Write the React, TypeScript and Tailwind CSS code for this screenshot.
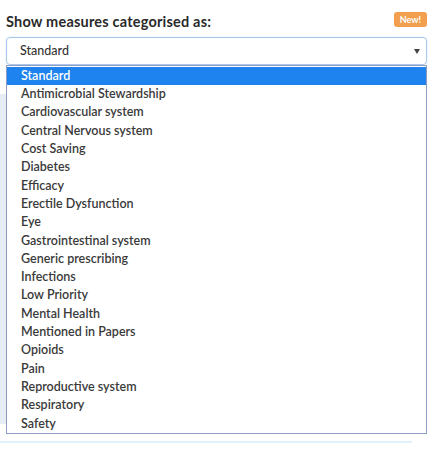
const OPTIONS = [
  'Standard',
  'Antimicrobial Stewardship',
  'Cardiovascular system',
  'Central Nervous system',
  'Cost Saving',
  'Diabetes',
  'Efficacy',
  'Erectile Dysfunction',
  'Eye',
  'Gastrointestinal system',
  'Generic prescribing',
  'Infections',
  'Low Priority',
  'Mental Health',
  'Mentioned in Papers',
  'Opioids',
  'Pain',
  'Reproductive system',
  'Respiratory',
  'Safety',
];

export default function App() {
  return (
    <div
      className="w-[439px] h-[451px] bg-white relative overflow-hidden"
      style={{ fontFamily: 'Lato, "Open Sans", sans-serif' }}
    >
      {/* page behind the popup */}
      <div className="absolute left-0 top-[94px] w-[6px] h-[330px] bg-[#e6edf5]" />

      <div className="relative pl-[6px] pr-[12px] pt-[12px]">
        {/* Header */}
        <div className="flex items-start justify-between h-[25px]">
          <h2 className="text-[14.5px] font-bold text-[#2a2a2a] mt-[3px] leading-none tracking-[0.2px]">
            Show measures categorised as:
          </h2>
          <span className="bg-[#f2a04f] text-white text-[9px] font-bold leading-none px-[6px] py-[3px] rounded-[3px] h-[15px] flex items-center">
            New!
          </span>
        </div>

        {/* Select */}
        <div className="h-[28px] border border-[#a9c8ec] rounded-[4px] flex items-center justify-between pl-[13px] pr-[6px] shadow-[0_0_2px_#cfe2f7]">
          <span className="text-[12.5px] text-[#333] font-medium">Standard</span>
          <svg width="6" height="5" viewBox="0 0 6 5">
            <path d="M0 0h6L3 5z" fill="#444" />
          </svg>
        </div>

        {/* Options popup */}
        <div className="border border-[#8d9cc0] bg-white pt-[1px]">
          {OPTIONS.map((o, i) => (
            <div
              key={o}
              className={`h-[18.3px] flex items-center pl-[14px] text-[12.5px] leading-none font-semibold ${
                i === 0 ? 'bg-[#1e83ee] text-white' : 'text-[#3a3a3a]'
              }`}
            >
              {o}
            </div>
          ))}
        </div>

        <div className="mt-[7px] -ml-[6px] w-[412px] h-[2px] bg-[#dff1fb]" />
      </div>
    </div>
  );
}
